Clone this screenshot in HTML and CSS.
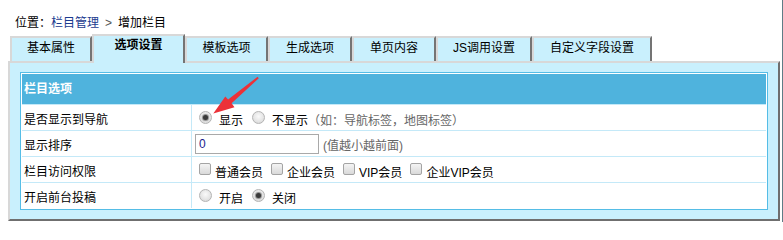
FILE: index.html
```html
<!DOCTYPE html>
<html lang="zh-CN">
<head>
<meta charset="utf-8">
<title>增加栏目</title>
<link rel="stylesheet" href="styles.css">
</head>
<body>
<div class="page">
  <div class="crumb">位置：<a class="crumb-link" href="#">栏目管理</a><span class="sep">&gt;</span>增加栏目</div>
  <div class="tabs">
    <div class="tab w82">基本属性</div>
    <div class="tab tab-active w93">选项设置</div>
    <div class="tab w83">模板选项</div>
    <div class="tab w84">生成选项</div>
    <div class="tab w84">单页内容</div>
    <div class="tab w96">JS调用设置</div>
    <div class="tab w120">自定义字段设置</div>
  </div>
  <div class="panel">
    <div class="grid">
      <div class="grid-head">栏目选项</div>
      <div class="row">
        <div class="label">是否显示到导航</div>
        <div class="field">
          <span class="radio checked"></span><span class="opt">显示</span>
          <span class="radio"></span><span class="opt">不显示</span><span class="hint">（如：导航标签，地图标签）</span>
        </div>
      </div>
      <div class="row">
        <div class="label">显示排序</div>
        <div class="field">
          <span class="input">0</span><span class="hint hint-sort">(值越小越前面)</span>
        </div>
      </div>
      <div class="row">
        <div class="label">栏目访问权限</div>
        <div class="field">
          <span class="check"></span><span class="opt opt-c">普通会员</span>
          <span class="check"></span><span class="opt opt-c">企业会员</span>
          <span class="check"></span><span class="opt opt-c">VIP会员</span>
          <span class="check"></span><span class="opt opt-c">企业VIP会员</span>
        </div>
      </div>
      <div class="row">
        <div class="label">开启前台投稿</div>
        <div class="field">
          <span class="radio"></span><span class="opt">开启</span>
          <span class="radio checked"></span><span class="opt">关闭</span>
        </div>
      </div>
    </div>
  </div>
  <svg class="arrow" width="783" height="222" viewBox="0 0 783 222">
    <polygon points="258.8,78.2 231.6,103.2 234.5,107.3 213.3,113.6 225.3,96.4 228.1,99.6 257.6,76.8" fill="#ec3138"/>
  </svg>
</div>
</body>
</html>
```

FILE: styles.css
```css
* { box-sizing: border-box; }

body {
  margin: 0;
  background: #fff;
  font-family: "Liberation Sans", "Noto Sans CJK SC", sans-serif;
  font-size: 12px;
  color: #000;
}

.page {
  position: relative;
  width: 783px;
  height: 222px;
  border-right: 1px solid #5e7c86;
}

.crumb {
  height: 34px;
  padding: 15px 0 0 15px;
  line-height: 16px;
}

.crumb-link {
  color: #1b3b8f;
  text-decoration: none;
}

.sep {
  color: #555;
  margin: 0 6px;
}

.tabs {
  display: flex;
  align-items: flex-end;
  height: 27px;
  margin-left: 10px;
}

.tab {
  height: 25px;
  background: #c9f0fd;
  border-top: 2px solid #d8d8d8;
  border-left: 2px solid #d8d8d8;
  border-right: 2px solid #747474;
  text-align: center;
  line-height: 16px;
  padding-top: 2px;
}

.tab-active {
  position: relative;
  z-index: 1;
  height: 29px;
  margin-bottom: -2px;
  font-weight: bold;
  padding-top: 1px;
}

.w82 { width: 82px; }
.w83 { width: 83px; }
.w84 { width: 84px; }
.w93 { width: 93px; }
.w96 { width: 96px; }
.w120 { width: 120px; }

.panel {
  width: 772px;
  height: 160px;
  margin-left: 8px;
  background: #c9f0fd;
  border-top: 2px solid #d8d8d8;
  border-left: 2px solid #d8d8d8;
  border-right: 2px solid #6f6f6f;
  border-bottom: 2px solid #6f6f6f;
  padding: 9px 10px;
}

.grid {
  height: 138px;
  border: 1px solid #55bde6;
  background: #fff;
  padding: 1px;
}

.grid-head {
  height: 30px;
  background: #4fb3dd;
  color: #fff;
  font-weight: bold;
  line-height: 30px;
  padding-left: 2px;
}

.row {
  display: grid;
  grid-template-columns: 170px 1fr;
  height: 26px;
  border-top: 1px solid #c4e9f8;
}

.label {
  display: flex;
  align-items: center;
  padding-left: 2px;
  padding-top: 2px;
  border-right: 1px solid #c4e9f8;
}

.field {
  display: flex;
  align-items: center;
  padding-left: 7px;
}

.radio {
  width: 13px;
  height: 13px;
  border-radius: 50%;
  border: 1px solid #b4b4b4;
  background: radial-gradient(circle at 50% 40%, #fafafa 0%, #e4e4e4 60%, #cfcfcf 100%);
  margin-right: 7px;
  margin-top: -1px;
  display: flex;
  align-items: center;
  justify-content: center;
}

.radio.checked::after {
  content: "";
  width: 5px;
  height: 5px;
  border-radius: 50%;
  background: #3a3a3a;
  box-shadow: 0 0 1px 1px #8a8a8a;
}

.opt {
  margin-right: 9px;
  padding-top: 4px;
}

.check {
  width: 12px;
  height: 12px;
  border: 1px solid #a4a4a4;
  border-radius: 2px;
  background: linear-gradient(#f4f4f4, #d9d9d9);
  margin-right: 4px;
  margin-top: -2px;
}

.opt-c {
  margin-right: 8px;
}

.hint {
  color: #666;
  padding-top: 4px;
  margin-left: -9px;
}

.input {
  width: 124px;
  height: 20px;
  margin-left: -4px;
  border: 1px solid #a9a9a9;
  color: #1a1a8c;
  line-height: 18px;
  padding-left: 3px;
  background: #fff;
}

.hint-sort {
  margin-left: 4px;
  padding-top: 2px;
}

.arrow {
  position: absolute;
  left: 0;
  top: 0;
  pointer-events: none;
}
```
